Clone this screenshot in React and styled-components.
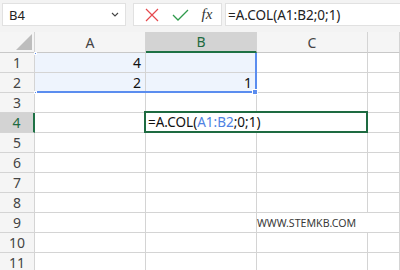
import React from 'react'
import styled, { createGlobalStyle } from 'styled-components'

const GlobalStyle = createGlobalStyle`
  body {
    margin: 0;
    overflow: hidden;
    font-family: "Noto Sans", "Open Sans", Arial, sans-serif;
  }
`

const Page = styled.div`
  width: 400px;
  height: 270px;
  overflow: hidden;
  background: #fff;
`

const Toolbar = styled.div`
  display: flex;
  align-items: flex-start;
  height: 32px;
  box-sizing: border-box;
  padding: 3px 0 0 2px;
  background: #f3f3f3;
`

const Box = styled.div`
  display: flex;
  align-items: center;
  box-sizing: border-box;
  height: 23px;
  background: #fff;
  border: 1px solid #e1e1e1;
  font-size: 13px;
  color: #222;
`

const NameBox = styled(Box)`
  width: 124px;
  justify-content: space-between;
  padding: 0 6px 0 6px;
`

const ActionBox = styled(Box)`
  width: 89px;
  margin-left: 7px;
  justify-content: space-around;
  padding: 0 2px 0 4px;
`

const FormulaBox = styled(Box)`
  flex: 1;
  margin-left: 3px;
  border-right: none;
  padding-left: 2px;
  font-size: 13.5px;
`

const Fx = styled.span`
  font-family: "Liberation Serif", serif;
  font-style: italic;
  font-size: 15px;
  color: #333;
`

const Grid = styled.div`
  position: relative;
  display: grid;
  grid-template-columns: 35px 111px 111px 111px 1fr;
  grid-auto-rows: 20px;
  grid-template-rows: 21px;
`

const HeadCell = styled.div`
  box-sizing: border-box;
  display: flex;
  align-items: center;
  justify-content: center;
  background: ${p => (p.$active ? '#d3d3d3' : '#f5f5f5')};
  color: ${p => (p.$active ? '#1e6b41' : '#444')};
  font-size: 14px;
  border-right: 1px solid #d4d4d4;
  border-bottom: 1px solid #c8c8c8;
`

const ColHead = styled(HeadCell)`
  ${p => p.$active && 'border-bottom: 2px solid #1e7145;'}
`

const RowHead = styled(HeadCell)`
  ${p => p.$active && 'border-right: 2px solid #1e7145;'}
  border-bottom: 1px solid #d4d4d4;
`

const Corner = styled(HeadCell)`
  align-items: flex-end;
  justify-content: flex-end;
  padding: 0 2px 2px 0;
`

const Cell = styled.div`
  box-sizing: border-box;
  display: flex;
  align-items: center;
  justify-content: flex-end;
  padding-right: 4px;
  font-size: 14px;
  color: #111;
  background: ${p => (p.$picked ? '#eef4fd' : '#fff')};
  border-right: 1px solid #d4d4d4;
  border-bottom: 1px solid #d4d4d4;
`

const Note = styled(Cell)`
  justify-content: flex-start;
  padding-left: 0;
  font-size: 10.6px;
  color: #3a3a3a;
  white-space: nowrap;
  overflow: visible;
  border-right: none;
`

const RangeMark = styled.div`
  position: absolute;
  left: 35px;
  top: 21px;
  width: 222px;
  height: 40px;
  box-sizing: border-box;
  border-right: 2px solid #5b8def;
  border-bottom: 2px solid #5b8def;
  pointer-events: none;
`

const Handle = styled.div`
  position: absolute;
  width: ${p => p.$size}px;
  height: ${p => p.$size}px;
  background: #5b8def;
  border: 1px solid #fff;
  box-sizing: content-box;
`

const EditBox = styled.div`
  position: absolute;
  left: 144px;
  top: 79px;
  width: 224px;
  height: 22px;
  box-sizing: border-box;
  border: 2px solid #1e6b41;
  background: #fff;
  display: flex;
  align-items: center;
  padding-left: 2px;
  font-size: 13.5px;
  color: #111;
`

const Ref = styled.span`
  color: #4f82e3;
`

const columns = ['A', 'B', 'C', '']
const values = {
  1: ['4', '', '', ''],
  2: ['2', '1', '', ''],
}

export default function App() {
  const rows = Array.from({ length: 11 }, (_, i) => i + 1)
  return (
    <Page>
      <GlobalStyle />
      <Toolbar>
        <NameBox>
          <span>B4</span>
          <svg width="8" height="5" viewBox="0 0 8 5">
            <path d="M1 1 L4 4 L7 1" fill="none" stroke="#444" strokeWidth="1.1" />
          </svg>
        </NameBox>
        <ActionBox>
          <svg width="14" height="14" viewBox="0 0 14 14">
            <path d="M1 1 L13 13 M13 1 L1 13" stroke="#e5484d" strokeWidth="1.2" />
          </svg>
          <svg width="17" height="12" viewBox="0 0 17 12">
            <path d="M1 6 L6 11 L16 1" fill="none" stroke="#2f9a4c" strokeWidth="1.3" />
          </svg>
          <Fx>fx</Fx>
        </ActionBox>
        <FormulaBox>=A.COL(A1:B2;0;1)</FormulaBox>
      </Toolbar>
      <Grid>
        <Corner>
          <svg width="16" height="16" viewBox="0 0 16 16">
            <path d="M16 0 L16 16 L0 16 Z" fill="#bdbdbd" />
          </svg>
        </Corner>
        {columns.map((c, i) => (
          <ColHead key={i} $active={c === 'B'}>{c}</ColHead>
        ))}
        {rows.map(r => (
          <React.Fragment key={r}>
            <RowHead $active={r === 4}>{r}</RowHead>
            {columns.map((c, i) => {
              if (r === 9 && i === 2) {
                return <Note key={i}>WWW.STEMKB.COM</Note>
              }
              return (
                <Cell key={i} $picked={r <= 2 && i < 2}>
                  {values[r] ? values[r][i] : ''}
                </Cell>
              )
            })}
          </React.Fragment>
        ))}
        <RangeMark />
        <Handle $size={1} style={{ left: 34, top: 20 }} />
        <Handle $size={1} style={{ left: 34, top: 59 }} />
        <Handle $size={4} style={{ left: 252, top: 57 }} />
        <EditBox>
          =A.COL(<Ref>A1:B2</Ref>;0;1)
        </EditBox>
      </Grid>
    </Page>
  )
}
